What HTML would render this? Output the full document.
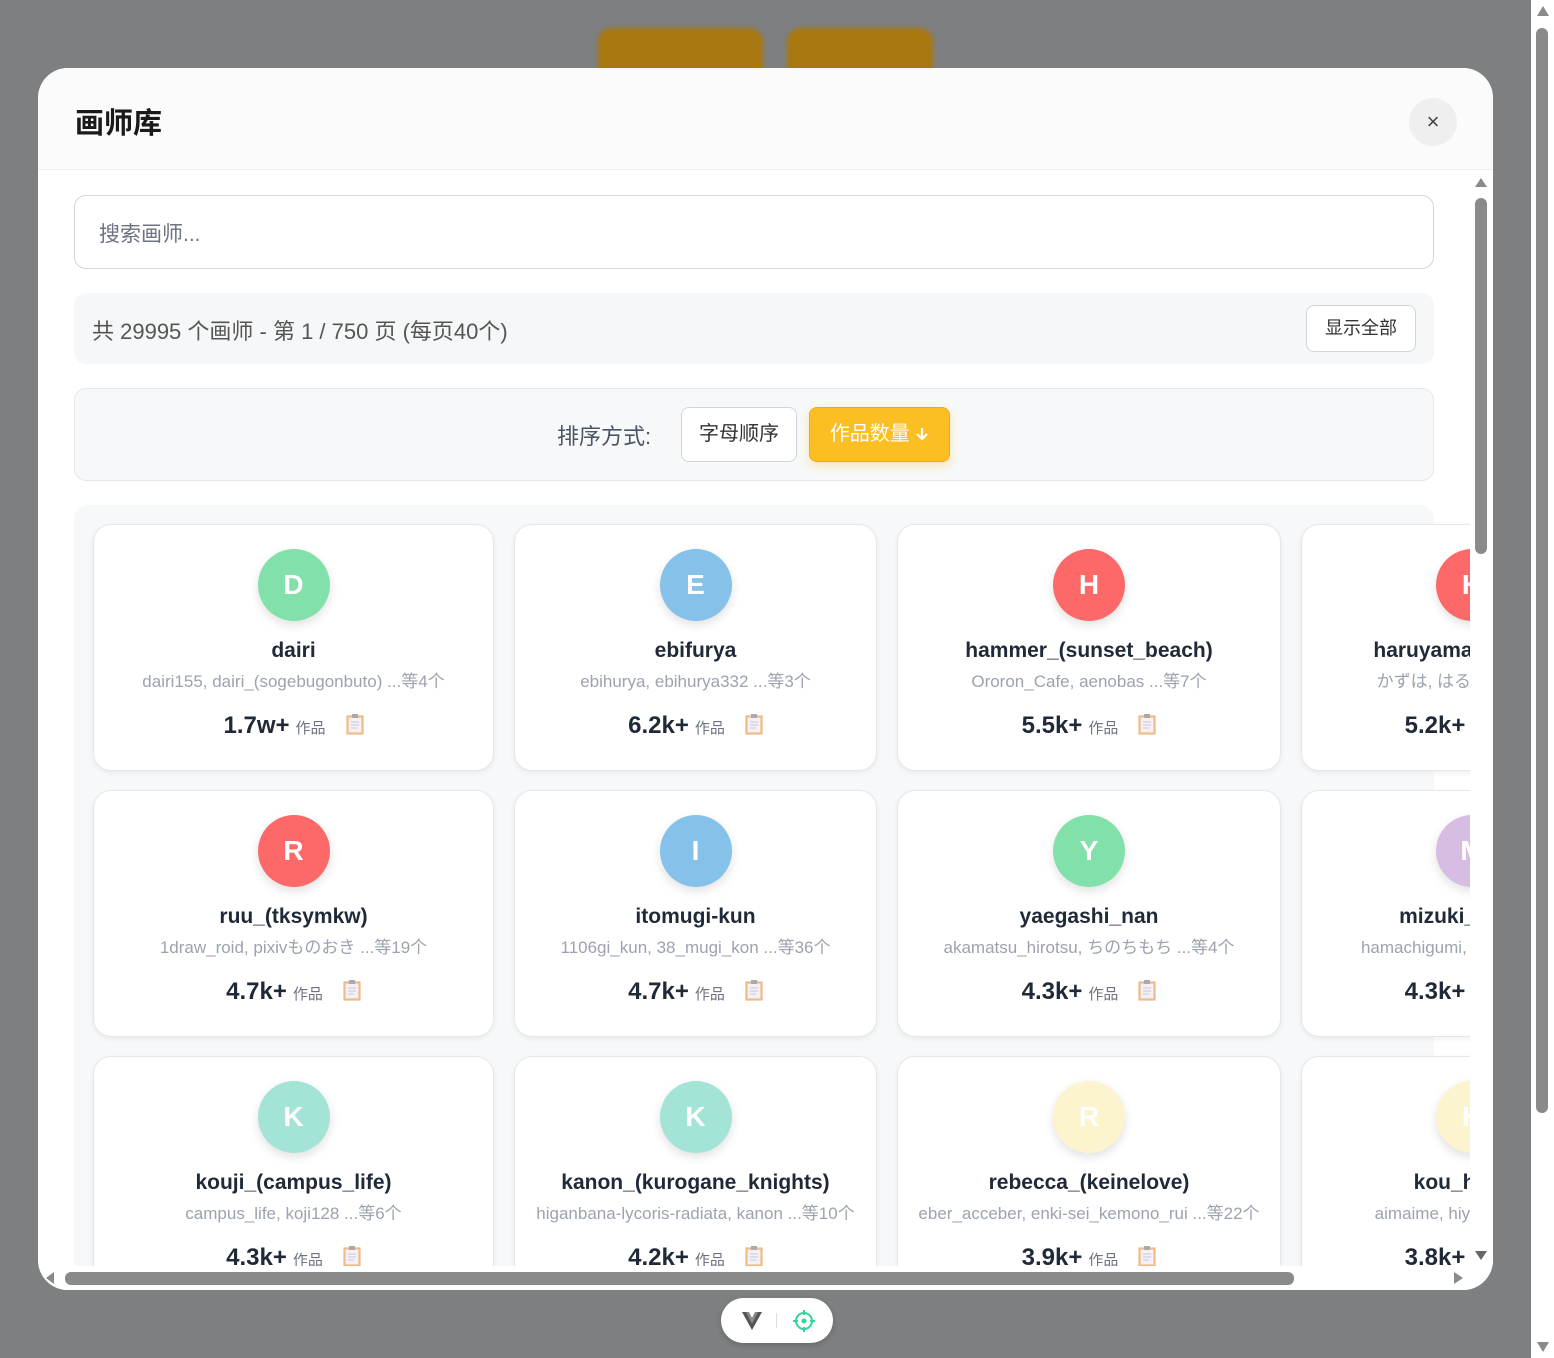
<!DOCTYPE html>
<html><head><meta charset="utf-8"><style>
*{box-sizing:border-box;margin:0;padding:0}
body{width:1554px;height:1358px;overflow:hidden;background:#7d7f80;font-family:"Liberation Sans","Noto Sans CJK SC",sans-serif;position:relative}
.a{position:absolute}
.modal{left:38px;top:68px;width:1455px;height:1222px;background:#fff;border-radius:30px;overflow:hidden}
.clip{position:absolute;left:0;top:0;width:1554px;height:1358px;clip-path:inset(171px 84px 92px 38px)}
.card{position:absolute;background:#fff;border:1px solid #e5e7eb;border-radius:18px;box-shadow:0 2px 6px rgba(0,0,0,.06);height:247px;text-align:center}
.av{position:absolute;left:50%;top:24px;width:72px;height:72px;margin-left:-36px;border-radius:50%;color:#fff;font-weight:700;font-size:28px;line-height:72px;box-shadow:0 4px 10px rgba(0,0,0,.12)}
.nm{position:absolute;left:-50px;right:-50px;top:114px;font-size:21px;font-weight:600;color:#1f2937;white-space:nowrap}
.al{position:absolute;left:-50px;right:-50px;top:142px;font-size:17px;color:#9ca3af;white-space:nowrap}
.ct{position:absolute;left:-50px;right:-50px;top:187px;white-space:nowrap;font-size:24px;font-weight:700;color:#1f2937}
.ct small{font-size:15px;font-weight:400;color:#6b7280;margin-left:6px}
.ct svg{margin-left:20px;vertical-align:-2px}
</style></head><body>
<div class="a" style="left:598px;top:28px;width:165px;height:60px;background:#a9780f;border-radius:14px;filter:blur(2px)"></div>
<div class="a" style="left:787px;top:28px;width:146px;height:60px;background:#a9780f;border-radius:14px;filter:blur(2px)"></div>
<div class="a" style="left:1531px;top:0;width:23px;height:1358px;background:#fff"></div>
<div class="a" style="left:1536px;top:28px;width:12px;height:1085px;background:#8a8a8a;border-radius:6px"></div>
<div class="a" style="left:1537px;top:6px;width:0;height:0;border-left:6px solid transparent;border-right:6px solid transparent;border-bottom:10px solid #8a8a8a"></div>
<div class="a" style="left:1537px;top:1342px;width:0;height:0;border-left:6px solid transparent;border-right:6px solid transparent;border-top:10px solid #8a8a8a"></div>

<div class="a modal">
 <div class="a" style="left:0;top:0;width:1455px;height:102px;background:#fbfbfc;border-bottom:1px solid #eceef1"></div>
 <div class="a" style="left:37px;top:32px;font-size:29px;font-weight:700;color:#1a1a1a">画师库</div>
 <div class="a" style="left:1371px;top:30px;width:48px;height:48px;border-radius:50%;background:#efefef;text-align:center;line-height:48px;font-size:22px;color:#444">×</div>
 <div class="a" style="left:1432px;top:102px;width:23px;height:1120px;background:#fff"></div>
 <div class="a" style="left:1437px;top:130px;width:12px;height:356px;background:#8a8a8a;border-radius:6px"></div>
 <div class="a" style="left:1437px;top:110px;border-left:6px solid transparent;border-right:6px solid transparent;border-bottom:9px solid #8a8a8a"></div>
 <div class="a" style="left:1437px;top:1183px;border-left:6px solid transparent;border-right:6px solid transparent;border-top:9px solid #666"></div>
 <div class="a" style="left:0;top:1198px;width:1432px;height:24px;background:#fff"></div>
 <div class="a" style="left:27px;top:1204px;width:1229px;height:13px;background:#8a8a8a;border-radius:6px"></div>
 <div class="a" style="left:8px;top:1204px;border-top:6px solid transparent;border-bottom:6px solid transparent;border-right:8px solid #8a8a8a"></div>
 <div class="a" style="left:1416px;top:1204px;border-top:6px solid transparent;border-bottom:6px solid transparent;border-left:9px solid #8a8a8a"></div>
</div>

<div class="clip">
 <div class="a" style="left:74px;top:195px;width:1360px;height:74px;border:1px solid #d4d6db;border-radius:12px;background:#fff"></div>
 <div class="a" style="left:99px;top:218px;font-size:21px;color:#6b7280">搜索画师...</div>
 <div class="a" style="left:74px;top:293px;width:1360px;height:71px;background:#f6f7f8;border-radius:12px"></div>
 <div class="a" style="left:92px;top:314px;font-size:22px;color:#555">共 29995 个画师 - 第 1 / 750 页 (每页40个)</div>
 <div class="a" style="left:1306px;top:305px;width:110px;height:47px;border:1px solid #d1d5db;border-radius:8px;background:#fff;text-align:center;line-height:45px;font-size:18px;color:#333">显示全部</div>
 <div class="a" style="left:74px;top:388px;width:1360px;height:93px;background:#f7f8fa;border:1px solid #e5e7eb;border-radius:12px"></div>
 <div class="a" style="left:557px;top:419px;font-size:22px;color:#4b5563">排序方式:</div>
 <div class="a" style="left:681px;top:407px;width:116px;height:55px;border:1px solid #d1d5db;border-radius:8px;background:#fff;text-align:center;line-height:53px;font-size:20px;color:#333">字母顺序</div>
 <div class="a" style="left:809px;top:407px;width:141px;height:55px;border:1px solid #f0a818;border-radius:8px;background:#fbbf24;text-align:center;line-height:53px;font-size:20px;color:#fff;box-shadow:0 4px 10px rgba(251,191,36,.35)">作品数量 <svg width="14" height="16" style="vertical-align:-2px"><path d="M7 2v11M2 8l5 5 5-5" stroke="#fff" stroke-width="2.2" fill="none"/></svg></div>
 <div class="a" style="left:74px;top:505px;width:1360px;height:800px;background:#f7f8fa;border-radius:14px"></div>

 <!-- row 1 -->
 <div class="card" style="left:93px;top:524px;width:401px"><div class="av" style="background:#82e0aa">D</div><div class="nm">dairi</div><div class="al">dairi155, dairi_(sogebugonbuto) ...等4个</div><div class="ct">1.7w+<small>作品</small><svg width="18" height="22"><rect x="1" y="3" width="16" height="18" fill="#f4cfa8" stroke="#e5a874"/><rect x="3" y="5" width="12" height="14" fill="#f3f1f8"/><rect x="6" y="1" width="6" height="4" fill="#aaa"/><path d="M5 9h8M5 12h8M5 15h6" stroke="#c9c6d6"/></svg></div></div>
 <div class="card" style="left:514px;top:524px;width:363px"><div class="av" style="background:#85c1e9">E</div><div class="nm">ebifurya</div><div class="al">ebihurya, ebihurya332 ...等3个</div><div class="ct">6.2k+<small>作品</small><svg width="18" height="22"><rect x="1" y="3" width="16" height="18" fill="#f4cfa8" stroke="#e5a874"/><rect x="3" y="5" width="12" height="14" fill="#f3f1f8"/><rect x="6" y="1" width="6" height="4" fill="#aaa"/><path d="M5 9h8M5 12h8M5 15h6" stroke="#c9c6d6"/></svg></div></div>
 <div class="card" style="left:897px;top:524px;width:384px"><div class="av" style="background:#fd6868">H</div><div class="nm">hammer_(sunset_beach)</div><div class="al">Ororon_Cafe, aenobas ...等7个</div><div class="ct">5.5k+<small>作品</small><svg width="18" height="22"><rect x="1" y="3" width="16" height="18" fill="#f4cfa8" stroke="#e5a874"/><rect x="3" y="5" width="12" height="14" fill="#f3f1f8"/><rect x="6" y="1" width="6" height="4" fill="#aaa"/><path d="M5 9h8M5 12h8M5 15h6" stroke="#c9c6d6"/></svg></div></div>
 <div class="card" style="left:1301px;top:524px;width:342px"><div class="av" style="background:#fd6868">H</div><div class="nm">haruyama_kazunori</div><div class="al">かずは, はるやま ...等5个</div><div class="ct">5.2k+<small>作品</small><svg width="18" height="22"><rect x="1" y="3" width="16" height="18" fill="#f4cfa8" stroke="#e5a874"/></svg></div></div>
 <!-- row 2 -->
 <div class="card" style="left:93px;top:790px;width:401px"><div class="av" style="background:#fd6868">R</div><div class="nm">ruu_(tksymkw)</div><div class="al">1draw_roid, pixivものおき ...等19个</div><div class="ct">4.7k+<small>作品</small><svg width="18" height="22"><rect x="1" y="3" width="16" height="18" fill="#f4cfa8" stroke="#e5a874"/><rect x="3" y="5" width="12" height="14" fill="#f3f1f8"/><rect x="6" y="1" width="6" height="4" fill="#aaa"/><path d="M5 9h8M5 12h8M5 15h6" stroke="#c9c6d6"/></svg></div></div>
 <div class="card" style="left:514px;top:790px;width:363px"><div class="av" style="background:#85c1e9">I</div><div class="nm">itomugi-kun</div><div class="al">1106gi_kun, 38_mugi_kon ...等36个</div><div class="ct">4.7k+<small>作品</small><svg width="18" height="22"><rect x="1" y="3" width="16" height="18" fill="#f4cfa8" stroke="#e5a874"/><rect x="3" y="5" width="12" height="14" fill="#f3f1f8"/><rect x="6" y="1" width="6" height="4" fill="#aaa"/><path d="M5 9h8M5 12h8M5 15h6" stroke="#c9c6d6"/></svg></div></div>
 <div class="card" style="left:897px;top:790px;width:384px"><div class="av" style="background:#82e0aa">Y</div><div class="nm">yaegashi_nan</div><div class="al">akamatsu_hirotsu, ちのちもち ...等4个</div><div class="ct">4.3k+<small>作品</small><svg width="18" height="22"><rect x="1" y="3" width="16" height="18" fill="#f4cfa8" stroke="#e5a874"/><rect x="3" y="5" width="12" height="14" fill="#f3f1f8"/><rect x="6" y="1" width="6" height="4" fill="#aaa"/><path d="M5 9h8M5 12h8M5 15h6" stroke="#c9c6d6"/></svg></div></div>
 <div class="card" style="left:1301px;top:790px;width:342px"><div class="av" style="background:#d7bde2">M</div><div class="nm">mizuki_hitoshi</div><div class="al">hamachigumi, hitoshi ...等3个</div><div class="ct">4.3k+<small>作品</small><svg width="18" height="22"><rect x="1" y="3" width="16" height="18" fill="#f4cfa8" stroke="#e5a874"/></svg></div></div>
 <!-- row 3 -->
 <div class="card" style="left:93px;top:1056px;width:401px"><div class="av" style="background:#a3e4d7">K</div><div class="nm">kouji_(campus_life)</div><div class="al">campus_life, koji128 ...等6个</div><div class="ct">4.3k+<small>作品</small><svg width="18" height="22"><rect x="1" y="3" width="16" height="18" fill="#f4cfa8" stroke="#e5a874"/><rect x="3" y="5" width="12" height="14" fill="#f3f1f8"/><rect x="6" y="1" width="6" height="4" fill="#aaa"/><path d="M5 9h8M5 12h8M5 15h6" stroke="#c9c6d6"/></svg></div></div>
 <div class="card" style="left:514px;top:1056px;width:363px"><div class="av" style="background:#a3e4d7">K</div><div class="nm">kanon_(kurogane_knights)</div><div class="al">higanbana-lycoris-radiata, kanon ...等10个</div><div class="ct">4.2k+<small>作品</small><svg width="18" height="22"><rect x="1" y="3" width="16" height="18" fill="#f4cfa8" stroke="#e5a874"/><rect x="3" y="5" width="12" height="14" fill="#f3f1f8"/><rect x="6" y="1" width="6" height="4" fill="#aaa"/><path d="M5 9h8M5 12h8M5 15h6" stroke="#c9c6d6"/></svg></div></div>
 <div class="card" style="left:897px;top:1056px;width:384px"><div class="av" style="background:#fcf3cf">R</div><div class="nm">rebecca_(keinelove)</div><div class="al">eber_acceber, enki-sei_kemono_rui ...等22个</div><div class="ct">3.9k+<small>作品</small><svg width="18" height="22"><rect x="1" y="3" width="16" height="18" fill="#f4cfa8" stroke="#e5a874"/><rect x="3" y="5" width="12" height="14" fill="#f3f1f8"/><rect x="6" y="1" width="6" height="4" fill="#aaa"/><path d="M5 9h8M5 12h8M5 15h6" stroke="#c9c6d6"/></svg></div></div>
 <div class="card" style="left:1301px;top:1056px;width:342px"><div class="av" style="background:#fcf3cf">K</div><div class="nm">kou_hiyoyo</div><div class="al">aimaime, hiyokou ...等3个</div><div class="ct">3.8k+<small>作品</small><svg width="18" height="22"><rect x="1" y="3" width="16" height="18" fill="#f4cfa8" stroke="#e5a874"/></svg></div></div>
</div>

<div class="a" style="left:721px;top:1298px;width:112px;height:45px;background:#fff;border-radius:23px;box-shadow:0 2px 6px rgba(0,0,0,.2)">
 <svg class="a" style="left:20px;top:13px" width="22" height="20"><path d="M1 1h6l4 8 4-8h6L11 19z" fill="#555"/><path d="M5 1h3l3 6 3-6h3L11 13z" fill="#888"/></svg>
 <div class="a" style="left:55px;top:15px;width:1px;height:15px;background:#ddd"></div>
 <svg class="a" style="left:71px;top:11px" width="24" height="24"><circle cx="12" cy="12" r="8" fill="none" stroke="#34d399" stroke-width="2"/><circle cx="12" cy="12" r="2.5" fill="#34d399"/><path d="M12 1v5M12 18v5M1 12h5M18 12h5" stroke="#34d399" stroke-width="2"/></svg>
</div>
</body></html>
